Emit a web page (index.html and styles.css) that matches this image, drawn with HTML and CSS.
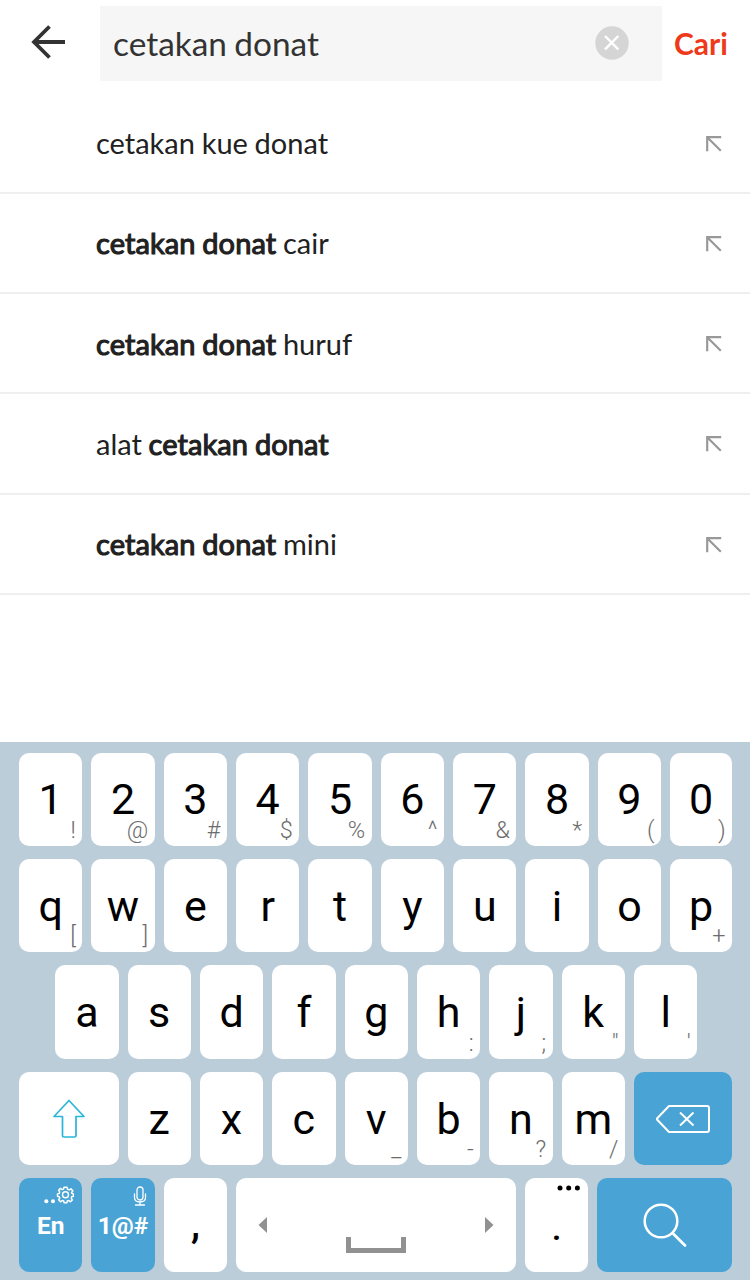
FILE: index.html
```html
<!DOCTYPE html>
<html lang="id">
<head>
    <meta charset="UTF-8">
    <meta name="viewport" content="width=device-width, initial-scale=1.0">
    <title>Cari</title>
    <link rel="stylesheet" href="styles.css">
</head>
<body>

    <svg class="sprite" width="0" height="0">
        <symbol id="fill-arrow" viewBox="0 0 16 16">
            <path d="M1.2 15.2V1.2H15.2M1.2 1.2L14.8 14.8" fill="none" stroke="#999" stroke-width="2.2"/>
        </symbol>
    </svg>

    <div class="header">
        <button class="back">
            <svg width="34" height="34" viewBox="0 0 34 34"><path d="M18.500 1.500L3 17L18.500 32.500M2.500 17H34" fill="none" stroke="#333" stroke-width="3.8"/></svg>
        </button>
        <div class="search">
            <span class="query">cetakan donat</span>
            <svg class="clear" width="34" height="34" viewBox="0 0 34 34"><circle cx="17" cy="17" r="16.7" fill="#d5d5d5"/><path d="M10 10L23.3 23.3M23.3 10L10 23.3" stroke="#fff" stroke-width="2.4"/></svg>
        </div>
        <button class="submit">Cari</button>
    </div>

    <ul class="suggestions">
        <li><span>cetakan kue donat</span><svg class="fill"><use href="#fill-arrow"/></svg></li>
        <li><span><b>cetakan donat</b> cair</span><svg class="fill"><use href="#fill-arrow"/></svg></li>
        <li><span><b>cetakan donat</b> huruf</span><svg class="fill"><use href="#fill-arrow"/></svg></li>
        <li><span>alat <b>cetakan donat</b></span><svg class="fill"><use href="#fill-arrow"/></svg></li>
        <li><span><b>cetakan donat</b> mini</span><svg class="fill"><use href="#fill-arrow"/></svg></li>
    </ul>

    <div class="keyboard">
        <div class="row">
            <div class="key">1<i>!</i></div>
            <div class="key">2<i>@</i></div>
            <div class="key">3<i>#</i></div>
            <div class="key">4<i>$</i></div>
            <div class="key">5<i>%</i></div>
            <div class="key">6<i>^</i></div>
            <div class="key">7<i>&amp;</i></div>
            <div class="key">8<i>*</i></div>
            <div class="key">9<i>(</i></div>
            <div class="key last">0<i>)</i></div>
        </div>
        <div class="row">
            <div class="key">q<i>[</i></div>
            <div class="key">w<i>]</i></div>
            <div class="key">e</div>
            <div class="key">r</div>
            <div class="key">t</div>
            <div class="key">y</div>
            <div class="key">u</div>
            <div class="key">i</div>
            <div class="key">o</div>
            <div class="key last">p<i>+</i></div>
        </div>
        <div class="row indent">
            <div class="key">a</div>
            <div class="key">s</div>
            <div class="key">d</div>
            <div class="key">f</div>
            <div class="key">g</div>
            <div class="key">h<i>:</i></div>
            <div class="key">j<i>;</i></div>
            <div class="key">k<i>"</i></div>
            <div class="key">l<i>'</i></div>
        </div>
        <div class="row">
            <div class="key shift">
                <svg width="34" height="40" viewBox="0 0 34 40"><path d="M17 1.5L32 17.5H24V36.5Q24 38 22.5 38H12Q10.500 38 10.500 36.500V17.500H2Z" fill="none" stroke="#29b6d8" stroke-width="1.700" stroke-linejoin="round"/></svg>
            </div>
            <div class="key">z</div>
            <div class="key">x</div>
            <div class="key">c</div>
            <div class="key">v<i>_</i></div>
            <div class="key">b<i>-</i></div>
            <div class="key">n<i>?</i></div>
            <div class="key">m<i>/</i></div>
            <div class="key blue backspace">
                <svg width="56" height="30" viewBox="0 0 56 30"><path d="M14 2H52Q54 2 54 4V26Q54 28 52 28H14L2 15.500V14.500Z" fill="none" stroke="#fff" stroke-width="2" stroke-linejoin="round"/><path d="M25 8.500L38.500 21.500M38.500 8.500L25 21.500" stroke="#fff" stroke-width="2"/></svg>
            </div>
        </div>
        <div class="row">
            <div class="key blue lang">En
                <svg class="corner" width="30" height="20" viewBox="0 0 30 20">
                    <circle cx="2.300" cy="15.200" r="2" fill="#fff"/>
                    <circle cx="9" cy="15.200" r="2" fill="#fff"/>
                    <g fill="none" stroke="#fff">
                        <circle cx="21.500" cy="8.800" r="3" stroke-width="1.400"/>
                        <path d="M20 1.200H23L23.500 3.200L25.200 3.900L27 2.800L28.900 4.900L27.500 6.500L28 7.500L29.500 8V10.300L27.700 10.800L27.200 12.200L28.300 14L26.500 15.800L24.800 14.500L23.300 15L22.800 16.700H20.200L19.700 15L18.200 14.500L16.500 15.800L14.600 13.800L15.700 12.100L15.200 10.800L13.500 10.300V7.900L15.200 7.400L15.700 5.900L14.600 4.200L16.400 2.400L18.200 3.600L19.500 3.100Z" stroke-width="1.500" stroke-linejoin="round"/>
                    </g>
                </svg>
            </div>
            <div class="key blue symbols">1@#
                <svg class="corner" width="14" height="20" viewBox="0 0 14 20">
                    <g fill="none" stroke="#fff" stroke-width="1.300" stroke-linecap="round">
                        <rect x="4" y="1" width="6" height="13" rx="3"/>
                        <path d="M1.500 8V11.500Q1.500 16 7 16T12.500 11.500V8M7 16V19M2.500 19H11.500"/>
                    </g>
                </svg>
            </div>
            <div class="key comma">,</div>
            <div class="key space">
                <svg width="9" height="16" viewBox="0 0 9 16"><path d="M9 0V16L0.500 8Z" fill="#919191"/></svg>
                <span class="bar"></span>
                <svg width="9" height="16" viewBox="0 0 9 16"><path d="M0 0V16L8.500 8Z" fill="#919191"/></svg>
            </div>
            <div class="key dot">.
                <svg class="corner" width="24" height="6" viewBox="0 0 24 6"><circle cx="3" cy="3" r="2.500"/><circle cx="11.700" cy="3" r="2.500"/><circle cx="20.400" cy="3" r="2.500"/></svg>
            </div>
            <div class="key blue go">
                <svg width="44" height="45" viewBox="0 0 44 45"><circle cx="18" cy="18" r="16.300" fill="none" stroke="#fff" stroke-width="2.500"/><path d="M29.500 30L42 42.500" stroke="#fff" stroke-width="2.700" stroke-linecap="round"/></svg>
            </div>
        </div>
    </div>

</body>
</html>
```
FILE: styles.css
```css
* {
    margin: 0;
    padding: 0;
    box-sizing: border-box;
}
body {
    width: 750px;
    height: 1280px;
    overflow: hidden;
    display: flex;
    flex-direction: column;
    background: #fff;
    font-family: Lato, sans-serif;
}
button {
    border: 0;
    background: none;
    font-family: inherit;
}
.sprite {
    display: none;
}
.header {
    display: flex;
    align-items: center;
    height: 93px;
    padding: 6px 0 12px;
}
.back {
    width: 100px;
    height: 37px;
    padding: 0 0 3px 31px;
    text-align: left;
}
.back svg {
    display: block;
}
.search {
    width: 562px;
    height: 75px;
    padding: 0 33px 1px 13px;
    display: flex;
    align-items: center;
    justify-content: space-between;
    background: #f6f6f6;
}
.query {
    font-size: 33.4px;
    word-spacing: -1.2px;
    color: #333;
}
.submit {
    margin-left: 12px;
    padding-bottom: 2px;
    font-size: 30px;
    font-weight: bold;
    color: #ee3a1a;
}
.suggestions {
    padding-top: 0.4px;
    list-style: none;
}
.suggestions li {
    display: flex;
    align-items: center;
    justify-content: space-between;
    height: 100.3px;
    padding: 0 28px 0 96px;
    border-bottom: 2px solid #efefef;
    font-size: 29px;
    word-spacing: -0.7px;
    color: #212121;
}
/* thickened regular weight, keeps the same letter widths */
.suggestions b {
    font-weight: normal;
    letter-spacing: 0.08px;
    -webkit-text-stroke: 1.1px #212121;
}
.fill {
    width: 16px;
    height: 16px;
    margin-top: 2px;
}
.keyboard {
    margin-top: auto;
    height: 538px;
    padding: 10.5px 0 0 19px;
    display: flex;
    flex-direction: column;
    gap: 13.2px;
    background: #bbcdd9;
    font-family: Roboto, sans-serif;
}
.row {
    display: flex;
    gap: 9px;
}
.indent {
    padding-left: 36.2px;
}
.key {
    position: relative;
    flex: none;
    width: 63.35px;
    height: 93.3px;
    display: flex;
    align-items: center;
    justify-content: center;
    border-radius: 10px;
    background: #fff;
    color: #000;
    font-size: 43px;
    line-height: 50px;
}
.key.last {
    width: 62px;
}
.key i {
    position: absolute;
    right: 6.5px;
    bottom: 4px;
    font-size: 23.5px;
    line-height: 24px;
    font-style: normal;
    font-weight: 300;
    color: #6c6c6c;
}
.key.blue {
    background: #49a4d5;
    color: #fff;
}
.key.shift {
    width: 99.5px;
}
.key.backspace {
    width: 98px;
}
.key.lang,
.key.symbols {
    padding-top: 2px;
    font-size: 24.5px;
    font-weight: bold;
}
.corner {
    position: absolute;
    top: 8px;
    right: 8px;
}
.key.comma {
    font-size: 40px;
    font-weight: 500;
}
.key.dot .corner {
    top: 7px;
    right: 7px;
}
.key.space {
    width: 280px;
    padding: 0 22px;
    justify-content: space-between;
}
.bar {
    width: 60px;
    height: 16px;
    margin-top: 40px;
    border: 5px solid #919191;
    border-top: 0;
}
.key.go {
    width: 135px;
}
```
